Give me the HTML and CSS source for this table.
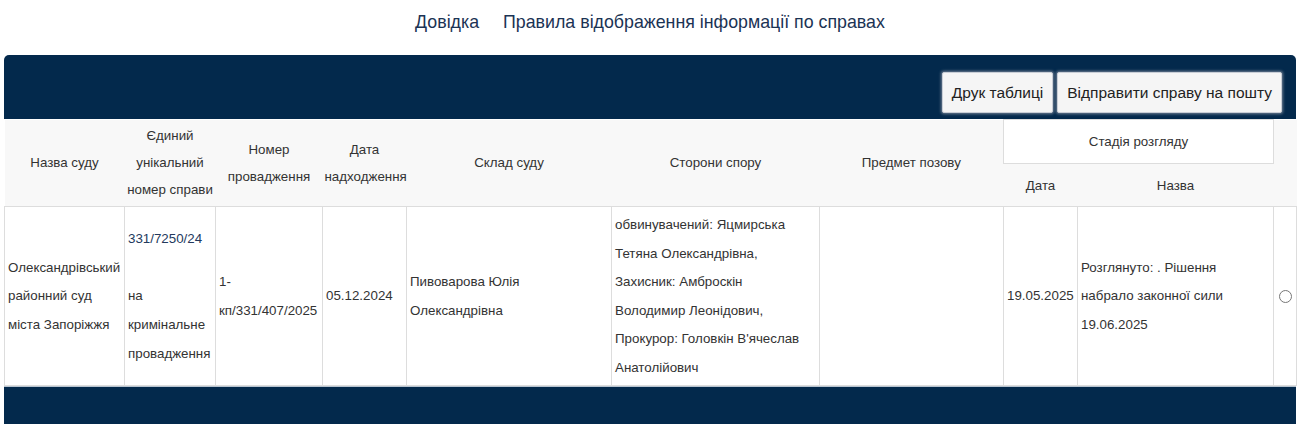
FILE: index.html
```html
<!DOCTYPE html>
<html lang="uk">
<head>
<meta charset="utf-8">
<title>Справи</title>
<link rel="stylesheet" href="styles.css">
</head>
<body>
<nav class="top-nav">
  <a class="nav-link" href="#">Довідка</a>
  <a class="nav-link" href="#">Правила відображення інформації по справах</a>
</nav>
<div class="panel">
  <div class="panel-bar">
    <button class="btn" type="button">Друк таблиці</button>
    <button class="btn" type="button">Відправити справу на пошту</button>
  </div>
  <table class="cases">
    <colgroup>
      <col class="c-court"><col class="c-num"><col class="c-proc"><col class="c-date"><col class="c-judges"><col class="c-parties"><col class="c-subject"><col class="c-sdate"><col class="c-sname"><col class="c-radio">
    </colgroup>
    <thead>
      <tr class="h1">
        <th rowspan="2">Назва суду</th>
        <th rowspan="2">Єдиний унікальний номер справи</th>
        <th rowspan="2">Номер провадження</th>
        <th rowspan="2">Дата надходження</th>
        <th rowspan="2">Склад суду</th>
        <th rowspan="2">Сторони спору</th>
        <th rowspan="2">Предмет позову</th>
        <th colspan="2" class="stage">Стадія розгляду</th>
        <th rowspan="2"></th>
      </tr>
      <tr class="h2">
        <th>Дата</th>
        <th>Назва</th>
      </tr>
    </thead>
    <tbody>
      <tr>
        <td>Олександрівський районний суд міста Запоріжжя</td>
        <td><a class="case-link" href="#">331/7250/24</a><br><br>на кримінальне провадження</td>
        <td>1-кп/331/407/2025</td>
        <td>05.12.2024</td>
        <td>Пивоварова Юлія Олександрівна</td>
        <td>обвинувачений: Яцмирська Тетяна Олександрівна, Захисник: Амброскін Володимир Леонідович, Прокурор: Головкін В'ячеслав Анатолійович</td>
        <td></td>
        <td>19.05.2025</td>
        <td>Розглянуто: . Рішення набрало законної сили 19.06.2025</td>
        <td class="radio-cell"><span class="radio"></span></td>
      </tr>
    </tbody>
  </table>
  <div class="panel-foot"></div>
</div>
</body>
</html>
```
FILE: styles.css
```css
html, body {
  margin: 0;
  padding: 0;
  background: #fff;
  font-family: "Liberation Sans", Arial, sans-serif;
  color: #333;
}

.top-nav {
  display: flex;
  justify-content: center;
  gap: 24px;
  padding: 12px 14px 0 0;
  height: 55px;
  box-sizing: border-box;
}

.nav-link {
  font-size: 17.8px;
  line-height: 20px;
  color: #1b3354;
  text-decoration: none;
}

.panel {
  margin-left: 4px;
  width: 1292px;
}

.panel-bar {
  background: #03294c;
  border-radius: 5px 5px 0 0;
  height: 64px;
  box-sizing: border-box;
  padding: 17px 14px 6px;
  display: flex;
  justify-content: flex-end;
  gap: 4px;
}

.btn {
  height: 41px;
  padding: 0 9px;
  font-family: "Liberation Sans", Arial, sans-serif;
  font-size: 15.5px;
  color: #222;
  background: #f5f5f5;
  border: 1px solid #c9ced6;
  border-radius: 2px;
  box-shadow: 0 0 3px 1px rgba(140, 150, 165, 0.8);
}

.cases {
  width: 1292px;
  table-layout: fixed;
  border-collapse: collapse;
  font-size: 13.33px;
}

.c-court { width: 120px; }
.c-num { width: 91px; }
.c-proc { width: 107px; }
.c-date { width: 84px; }
.c-judges { width: 205px; }
.c-parties { width: 208px; }
.c-subject { width: 184px; }
.c-sdate { width: 74px; }
.c-sname { width: 196px; }
.c-radio { width: 23px; }

.cases thead th {
  background: #f8f8f8;
  font-weight: normal;
  color: #333;
  line-height: 27px;
  padding: 0 2px;
  text-align: center;
  vertical-align: middle;
}

.cases thead tr.h1 { height: 44px; }
.cases thead tr.h2 { height: 43px; }

.cases thead th.stage {
  background: #fff;
  border: 1px solid #ddd;
}

.cases tbody td {
  border: 1px solid #ddd;
  line-height: 28.6px;
  padding: 4px 3px 2px;
  vertical-align: middle;
  color: #333;
}

.case-link {
  color: #23395d;
  text-decoration: none;
}

.radio-cell {
  text-align: center;
}

.radio {
  display: inline-block;
  width: 13px;
  height: 13px;
  border: 1px solid #777;
  border-radius: 50%;
  vertical-align: middle;
  box-sizing: border-box;
}

.panel-foot {
  background: #03294c;
  height: 37px;
  border-top: 1px solid #b8c4d0;
}
```
